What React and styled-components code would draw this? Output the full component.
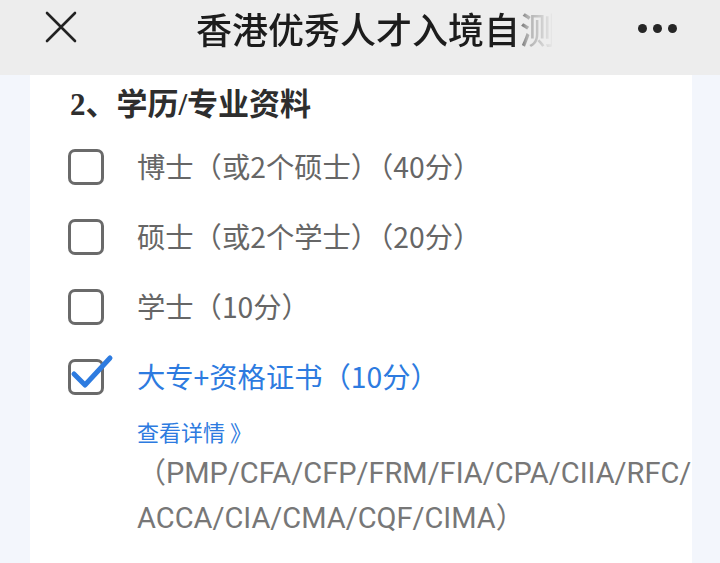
import React from 'react';
import styled, { createGlobalStyle } from 'styled-components';

const GlobalStyle = createGlobalStyle`
  html, body {
    margin: 0;
    padding: 0;
    height: 100%;
    overflow: hidden;
    background: #f3f6fc;
  }
  #root {
    height: 100%;
  }
`;

const Screen = styled.div`
  display: flex;
  flex-direction: column;
  height: 563px;
  font-family: "Noto Sans CJK SC", "Liberation Sans", sans-serif;
`;

const TopBar = styled.div`
  display: grid;
  grid-template-columns: 196px 356px 1fr;
  align-items: center;
  height: 54px;
  padding-bottom: 21px;
  background: #ededed;
`;

const CloseBtn = styled.div`
  padding-left: 45px;
  display: flex;
  align-items: center;
  height: 100%;
`;

const Title = styled.div`
  font-size: 36px;
  font-weight: 500;
  color: #1c1c1c;
  white-space: nowrap;
  overflow: hidden;
  line-height: 54px;
  padding-top: 1px;
  -webkit-mask-image: linear-gradient(to right, #000 0, #000 89%, rgba(0,0,0,0.3) 93%, rgba(0,0,0,0.03) 100%);
  mask-image: linear-gradient(to right, #000 0, #000 89%, rgba(0,0,0,0.3) 93%, rgba(0,0,0,0.03) 100%);
`;

const MoreBtn = styled.div`
  display: flex;
  justify-content: flex-end;
  gap: 6px;
  padding-right: 43px;
  padding-top: 2px;
`;

const Dot = styled.span`
  width: 9px;
  height: 9px;
  border-radius: 50%;
  background: #262626;
`;

const Body = styled.div`
  flex: 1;
  display: flex;
  padding: 0 28px 0 30px;
`;

const Card = styled.div`
  flex: 1;
  background: #fff;
  padding: 9px 0 0 38px;
`;

const Heading = styled.h2`
  margin: 0 0 6px 2px;
  font-family: "Liberation Serif", "Noto Sans CJK SC", serif;
  font-size: 31px;
  font-weight: 700;
  line-height: 42px;
  color: #2e2e2e;
`;

const Option = styled.div`
  display: flex;
  align-items: center;
  height: 70px;
  gap: 33px;
`;

const Box = styled.span`
  position: relative;
  flex: none;
  width: 30px;
  height: 30px;
  border: 3px solid #6a6a6a;
  border-radius: 7px;
`;

const Tick = styled.svg`
  position: absolute;
  left: 0;
  top: -8px;
  overflow: visible;
`;

const Label = styled.span`
  font-size: 28.3px;
  line-height: 36px;
  margin-top: -3px;
  color: ${p => (p.$active ? '#2d7be0' : '#666')};
  white-space: nowrap;
`;

const Detail = styled.div`
  padding-left: 69px;
  margin-top: 3px;
`;

const More = styled.div`
  font-size: 22px;
  line-height: 32px;
  color: #2d7be0;
`;

const Certs = styled.div`
  font-family: Roboto, "Noto Sans CJK SC", sans-serif;
  font-size: 29px;
  line-height: 45px;
  color: #777;
  white-space: nowrap;
  margin-top: 4px;
`;

const options = [
  { label: '博士（或2个硕士）（40分）' },
  { label: '硕士（或2个学士）（20分）' },
  { label: '学士（10分）' },
  { label: '大专+资格证书（10分）', checked: true },
];

export default function App() {
  return (
    <Screen>
      <GlobalStyle />
      <TopBar>
        <CloseBtn>
          <svg width="32" height="32" viewBox="0 0 32 32">
            <path d="M2 2 L30 30 M30 2 L2 30" stroke="#222" strokeWidth="2.6" strokeLinecap="round" />
          </svg>
        </CloseBtn>
        <Title>香港优秀人才入境自测</Title>
        <MoreBtn>
          <Dot />
          <Dot />
          <Dot />
        </MoreBtn>
      </TopBar>
      <Body>
        <Card>
          <Heading>2、学历/专业资料</Heading>
          {options.map((o, i) => (
            <Option key={i}>
              <Box>
                {o.checked && (
                  <Tick width="40" height="40" viewBox="0 0 40 40">
                    <path d="M3 20 L14 31 L39 4" fill="none" stroke="#2d7be0" strokeWidth="5" strokeLinecap="round" strokeLinejoin="round" />
                  </Tick>
                )}
              </Box>
              <Label $active={o.checked}>{o.label}</Label>
            </Option>
          ))}
          <Detail>
            <More>查看详情 》</More>
            <Certs>
              （PMP/CFA/CFP/FRM/FIA/CPA/CIIA/RFC/
              <br />
              ACCA/CIA/CMA/CQF/CIMA）
            </Certs>
          </Detail>
        </Card>
      </Body>
    </Screen>
  );
}
